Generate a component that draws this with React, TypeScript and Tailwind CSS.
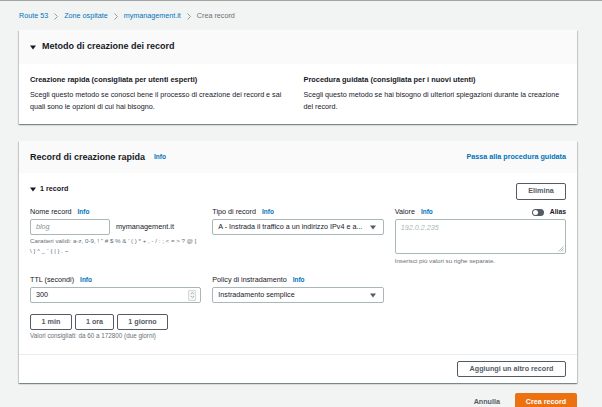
import React from "react";

const Info = ({ className = "ml-[6px]" }: { className?: string }) => (
  <span className={`text-[6.5px] font-bold text-[#0073bb] leading-[10px] ${className}`}>Info</span>
);

const Caret = ({ color = "#16191f" }: { color?: string }) => (
  <svg width="6" height="5" viewBox="0 0 6 5" className="shrink-0">
    <path d="M0 0.5H6L3 4.5Z" fill={color} />
  </svg>
);

const Chevron = () => (
  <svg width="4" height="7" viewBox="0 0 4 7" className="mx-[6px] shrink-0">
    <path d="M0.5 0.5L3.5 3.5L0.5 6.5" stroke="#879596" strokeWidth="0.9" fill="none" />
  </svg>
);

const Field = ({ children, className = "" }: { children: React.ReactNode; className?: string }) => (
  <div className={`h-[16px] bg-white border border-[#aab7b8] rounded-[2px] flex items-center px-[5px] text-[7.2px] ${className}`}>
    {children}
  </div>
);

const Btn = ({ children, className = "" }: { children: React.ReactNode; className?: string }) => (
  <div className={`h-[16px] bg-white border border-[#545b64] rounded-[2px] flex items-center justify-center text-[7.2px] font-bold text-[#545b64] ${className}`}>
    {children}
  </div>
);

const cardShadow =
  "shadow-[0_1px_1px_0_rgba(0,28,36,0.3),1px_1px_1px_0_rgba(0,28,36,0.15),-1px_1px_1px_0_rgba(0,28,36,0.15)]";

export default function App() {
  return (
    <div className="w-[602px] h-[407px] overflow-hidden bg-[#f2f3f3] border-t border-[#a4a4a4] font-['Liberation_Sans',Arial,sans-serif] text-[#16191f]">
      <div className="pl-[19px] pr-[25px]">
        {/* Breadcrumb */}
        <nav className="h-[30px] flex items-center text-[7.2px]">
          <span className="text-[#0073bb]">Route 53</span>
          <Chevron />
          <span className="text-[#0073bb]">Zone ospitate</span>
          <Chevron />
          <span className="text-[#0073bb]">mymanagement.it</span>
          <Chevron />
          <span className="text-[#687078]">Crea record</span>
        </nav>

        {/* Card 1 */}
        <section className={`-mt-[1px] bg-white ${cardShadow}`}>
          <div className="h-[34px] bg-[#fafafa] flex items-center pl-[11px] gap-[6px]">
            <Caret />
            <h2 className="text-[9px] font-bold">Metodo di creazione dei record</h2>
          </div>
          <div className="grid grid-cols-2 gap-x-[11px] px-[11px] pt-[10px] pb-[11px]">
            <div>
              <div className="text-[7.4px] font-bold leading-[12px] whitespace-nowrap">
                Creazione rapida (consigliata per utenti esperti)
              </div>
              <p className="mt-[3px] text-[7.2px] leading-[12px] whitespace-nowrap">
                Scegli questo metodo se conosci bene il processo di creazione dei record e sai
                <br />
                quali sono le opzioni di cui hai bisogno.
              </p>
            </div>
            <div>
              <div className="text-[7.4px] font-bold leading-[12px] whitespace-nowrap">
                Procedura guidata (consigliata per i nuovi utenti)
              </div>
              <p className="mt-[3px] text-[7.2px] leading-[12px] whitespace-nowrap">
                Scegli questo metodo se hai bisogno di ulteriori spiegazioni durante la creazione
                <br />
                del record.
              </p>
            </div>
          </div>
        </section>

        {/* Card 2 */}
        <section className={`mt-[17px] bg-white ${cardShadow}`}>
          <div className="h-[32px] bg-[#fafafa] flex items-center justify-between px-[11px]">
            <div className="flex items-center">
              <h2 className="text-[9px] font-bold leading-[12px]">Record di creazione rapida</h2>
              <Info className="ml-[9px]" />
            </div>
            <span className="text-[7.2px] font-bold text-[#0073bb]">Passa alla procedura guidata</span>
          </div>

          <div className="px-[11px] pt-[10px] pb-[13px]">
            <div className="h-[17px] flex justify-between items-start">
              <div className="flex items-center gap-[4px] leading-[12px]">
                <Caret />
                <span className="text-[7.2px] font-bold">1 record</span>
              </div>
              <Btn className="w-[50px] !h-[17px]">Elimina</Btn>
            </div>

            {/* Row 1 */}
            <div className="mt-[6px] grid grid-cols-3 gap-x-[11px]">
              <div>
                <div className="h-[12px] flex items-center text-[7.2px]">
                  Nome record<Info />
                </div>
                <div className="mt-[1px] flex items-center">
                  <Field className="w-[80px] italic text-[#879596]">blog</Field>
                  <span className="ml-[6px] text-[7.3px]">mymanagement.it</span>
                </div>
                <div className="mt-[1px] text-[6.2px] leading-[10px] text-[#687078] whitespace-nowrap">
                  Caratteri validi: a-z, 0-9, ! " # $ % &amp; ' ( ) * + , - / : ; &lt; = &gt; ? @ [
                  <br />
                  \ ] ^ _ ` {"{ | }"} . ~
                </div>
              </div>
              <div>
                <div className="h-[12px] flex items-center text-[7.2px]">
                  Tipo di record<Info />
                </div>
                <Field className="mt-[1px] justify-between pr-[7px]">
                  <span className="whitespace-nowrap">A - Instrada il traffico a un indirizzo IPv4 e a...</span>
                  <Caret color="#545b64" />
                </Field>
              </div>
              <div>
                <div className="h-[12px] flex items-center justify-between text-[7.2px]">
                  <span className="flex items-center">
                    Valore<Info />
                  </span>
                  <span className="flex items-center gap-[6px]">
                    <span className="w-[12px] h-[7px] rounded-full bg-[#545b64] flex items-center pl-[1px]">
                      <span className="w-[5px] h-[5px] rounded-full bg-white" />
                    </span>
                    <span className="font-bold text-[6.8px]">Alias</span>
                  </span>
                </div>
                <div className="mt-[1px] relative h-[35px] bg-white border border-[#aab7b8] rounded-[2px] px-[5px] pt-[3px] text-[7.2px] italic text-[#aab7b8] leading-[10px]">
                  192.0.2.235
                  <svg width="6" height="6" viewBox="0 0 6 6" className="absolute right-[1px] bottom-[1px]">
                    <path d="M5.5 0.5L0.5 5.5M5.5 2.5L2.5 5.5M5.5 4.5L4.5 5.5" stroke="#879596" strokeWidth="0.6" />
                  </svg>
                </div>
                <div className="mt-[2px] text-[6.2px] leading-[10px] text-[#687078] whitespace-nowrap">
                  Inserisci più valori su righe separate.
                </div>
              </div>
            </div>

            {/* Row 2 */}
            <div className="mt-[8px] grid grid-cols-3 gap-x-[11px]">
              <div>
                <div className="h-[12px] flex items-center text-[7.2px]">
                  TTL (secondi)<Info />
                </div>
                <Field className="mt-[1px] justify-between pr-[4px]">
                  <span>300</span>
                  <span className="w-[8px] h-[11px] bg-[#f2f3f3] border border-[#d5dbdb] rounded-[1px] flex items-center justify-center">
                    <svg width="5" height="8" viewBox="0 0 5 8">
                      <path d="M1 3L2.5 1.5L4 3M1 5L2.5 6.5L4 5" stroke="#879596" strokeWidth="0.7" fill="none" />
                    </svg>
                  </span>
                </Field>
                <div className="mt-[11px] flex gap-[3px]">
                  <Btn className="w-[42px]">1 min</Btn>
                  <Btn className="w-[39px]">1 ora</Btn>
                  <Btn className="w-[51px]">1 giorno</Btn>
                </div>
                <div className="mt-[1px] text-[6.3px] leading-[10px] text-[#687078] whitespace-nowrap">
                  Valori consigliati: da 60 a 172800 (due giorni)
                </div>
              </div>
              <div>
                <div className="h-[12px] flex items-center text-[7.2px]">
                  Policy di instradamento<Info />
                </div>
                <Field className="mt-[1px] justify-between pr-[7px]">
                  <span>Instradamento semplice</span>
                  <Caret color="#545b64" />
                </Field>
              </div>
              <div />
            </div>
          </div>

          <div className="border-t border-[#eaeded] px-[11px] pt-[6px] pb-[6px] flex justify-end">
            <Btn className="w-[109px]">Aggiungi un altro record</Btn>
          </div>
        </section>

        {/* Footer actions */}
        <div className="mt-[10px] flex justify-end items-start">
          <span className="mt-[3px] mr-[15px] text-[7.2px] font-bold text-[#545b64] leading-[12px]">Annulla</span>
          <div className="w-[62px] h-[18px] bg-[#ec7211] rounded-[2px] flex items-center justify-center text-[7.2px] font-bold text-white">
            Crea record
          </div>
        </div>
      </div>
    </div>
  );
}
